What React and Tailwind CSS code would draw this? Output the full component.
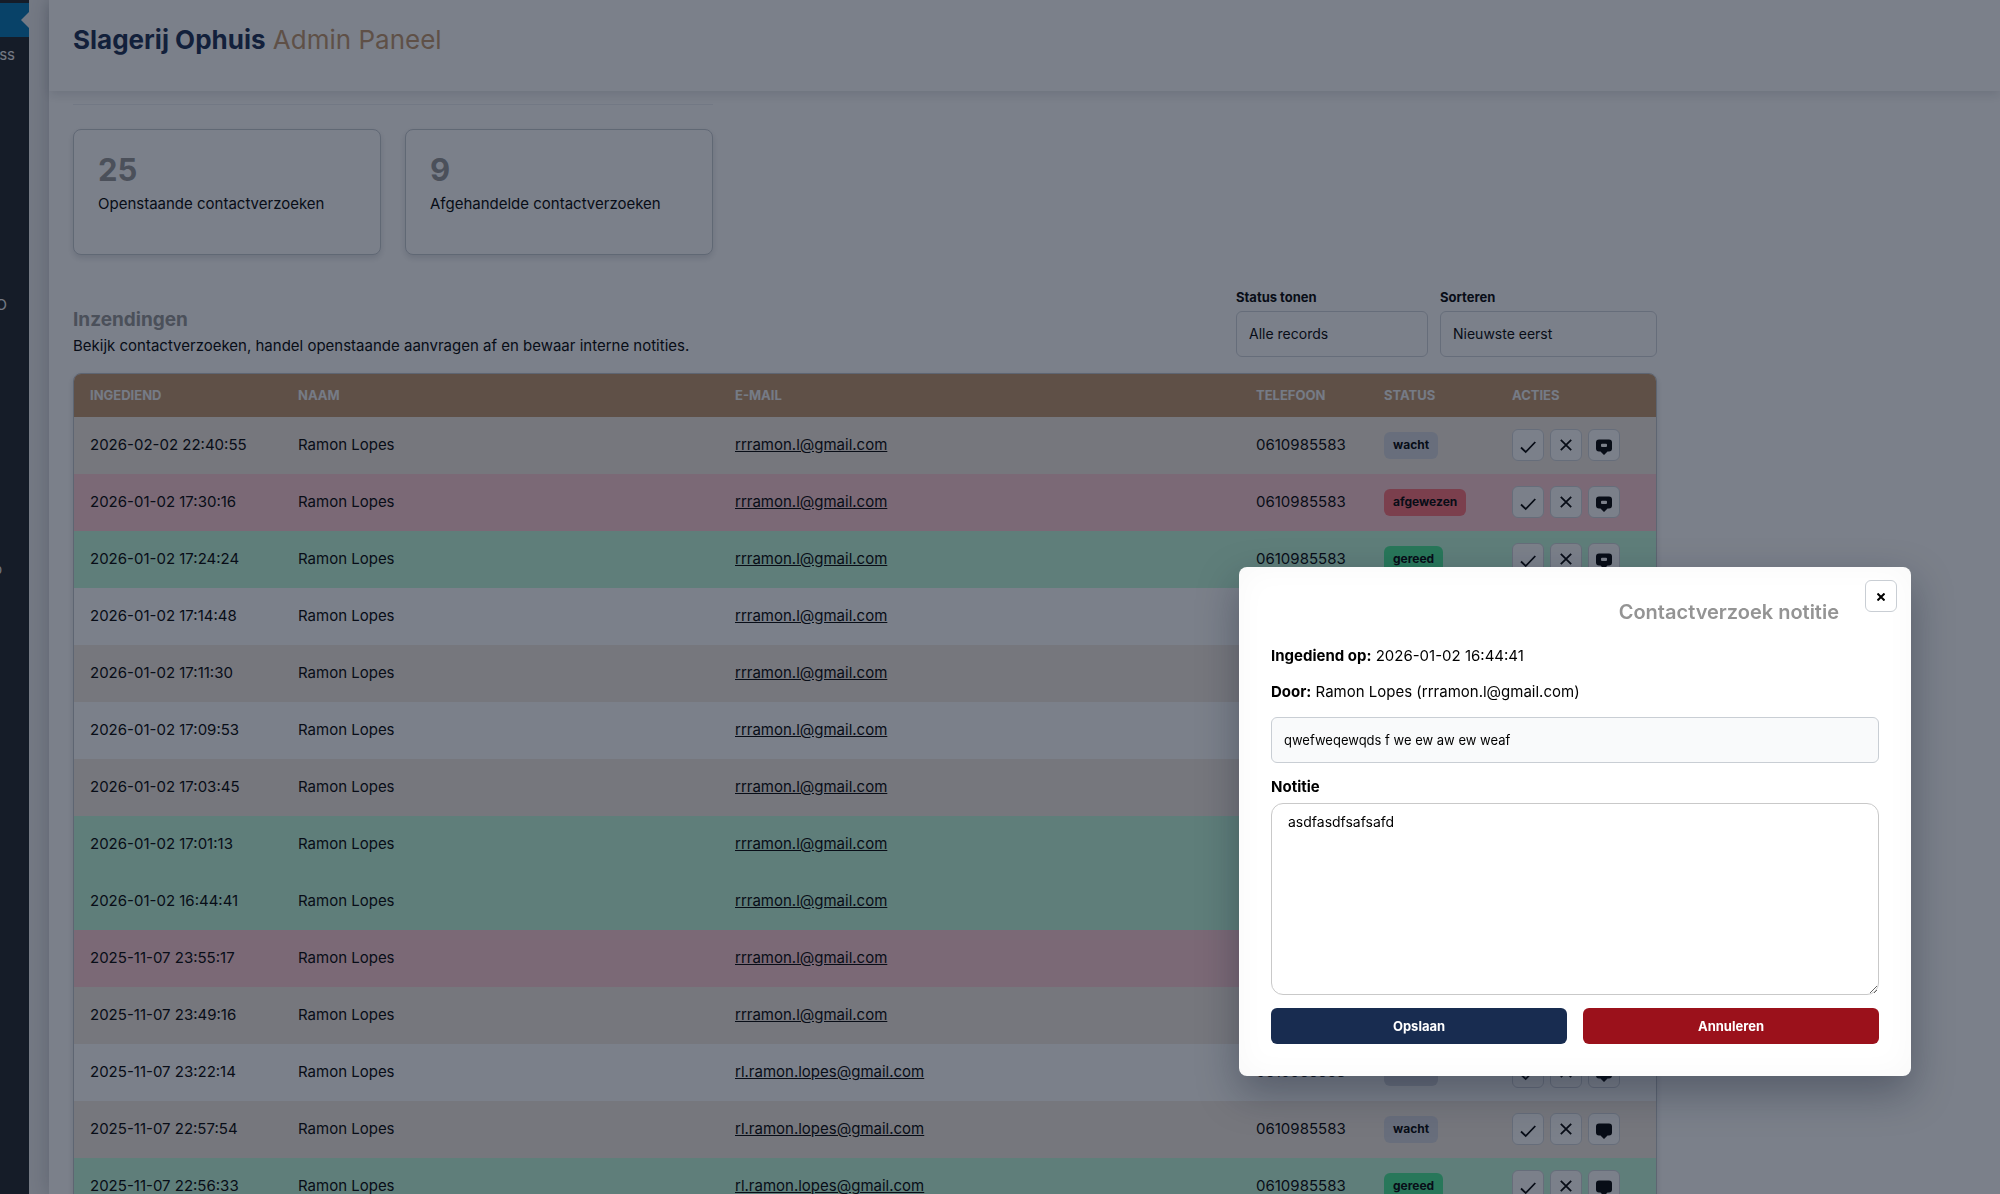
import React, {useState} from "react";

const rows = [
    {date: '2026-02-02 22:40:55', email: 'rrramon.l@gmail.com', status: 'wacht', note: true},
    {date: '2026-01-02 17:30:16', email: 'rrramon.l@gmail.com', status: 'afgewezen', note: true},
    {date: '2026-01-02 17:24:24', email: 'rrramon.l@gmail.com', status: 'gereed', note: true},
    {date: '2026-01-02 17:14:48', email: 'rrramon.l@gmail.com', status: 'wacht', note: true},
    {date: '2026-01-02 17:11:30', email: 'rrramon.l@gmail.com', status: 'wacht', note: true},
    {date: '2026-01-02 17:09:53', email: 'rrramon.l@gmail.com', status: 'wacht', note: true},
    {date: '2026-01-02 17:03:45', email: 'rrramon.l@gmail.com', status: 'wacht', note: true},
    {date: '2026-01-02 17:01:13', email: 'rrramon.l@gmail.com', status: 'gereed', note: true},
    {date: '2026-01-02 16:44:41', email: 'rrramon.l@gmail.com', status: 'gereed', note: true},
    {date: '2025-11-07 23:55:17', email: 'rrramon.l@gmail.com', status: 'afgewezen', note: false},
    {date: '2025-11-07 23:49:16', email: 'rrramon.l@gmail.com', status: 'wacht', note: false},
    {date: '2025-11-07 23:22:14', email: 'rl.ramon.lopes@gmail.com', status: 'wacht', note: false},
    {date: '2025-11-07 22:57:54', email: 'rl.ramon.lopes@gmail.com', status: 'wacht', note: false},
    {date: '2025-11-07 22:56:33', email: 'rl.ramon.lopes@gmail.com', status: 'gereed', note: false},
]

const badgeColors = {
    wacht: 'bg-[#d5d8df]',
    afgewezen: 'bg-[#ff7078]',
    gereed: 'bg-[#48ec96]',
}

function rowColor(status, index){
    if (status === 'afgewezen') return 'bg-[#ffccd3]';
    if (status === 'gereed') return 'bg-[#c1fbdb]';
    return index % 2 === 0 ? 'bg-[#f4ebe2]' : 'bg-white';
}

function IconButton({label, children}){
    return (
        <button type="button" aria-label={label} className="flex size-8 items-center justify-center rounded-md border border-[#d1d5db] bg-white text-black">
            {children}
        </button>
    )
}

function CheckIcon(){
    return (
        <svg viewBox="0 0 16 16" className="mt-1 size-4" fill="none" stroke="currentColor" strokeWidth="1.8">
            <path d="M1 8.500 L5.700 13 L15.300 3" />
        </svg>
    )
}

function CrossIcon(){
    return (
        <svg viewBox="0 0 16 16" className="size-4" fill="none" stroke="currentColor" strokeWidth="1.8">
            <path d="M2.800 2.800 L13.200 13.200 M13.200 2.800 L2.800 13.200" />
        </svg>
    )
}

// note icon has an opening in the bubble when a note is saved
function NoteIcon({filled}){
    return (
        <svg viewBox="0 0 16 16" className="mt-1 size-4" fill="currentColor">
            <path fillRule="evenodd" d={filled
                ? "M3 0.500h10a3 3 0 0 1 3 3v6a3 3 0 0 1-3 3h-1.500L8 16 4.500 12.500H3a3 3 0 0 1-3-3v-6a3 3 0 0 1 3-3zM6 4.800a1 1 0 0 0-1 1v1.200a1 1 0 0 0 1 1h4a1 1 0 0 0 1-1v-1.200a1 1 0 0 0-1-1z"
                : "M3 0.500h10a3 3 0 0 1 3 3v6a3 3 0 0 1-3 3h-1.500L8 16 4.500 12.500H3a3 3 0 0 1-3-3v-6a3 3 0 0 1 3-3z"} />
        </svg>
    )
}

function Sidebar(){
    return (
        <nav className="flex w-[29px] shrink-0 flex-col items-end overflow-hidden bg-[#1d2327] text-[15px] leading-5 text-[#f0f0f1]">
            <div className="relative mt-[3px] h-[34px] w-full shrink-0 bg-[#0077b3]">
                <span className="absolute top-[9px] right-0 border-y-8 border-r-8 border-y-transparent border-r-[#f0f0f1]"></span>
            </div>
            <a href="#wordpress" className="mt-2 mr-[14px] whitespace-nowrap">WordPress</a>
            <a href="#seo" className="mt-[230px] mr-[22px] whitespace-nowrap">Yoast SEO</a>
            <a href="#setup" className="mt-[244px] mr-[27px] whitespace-nowrap text-[13px]">Setup</a>
        </nav>
    )
}

function StatCard({value, label}){
    return (
        <div className="h-[126px] w-[308px] rounded-lg border border-[#c4c9cf] bg-white px-6 py-5 shadow-[0_3px_6px_rgba(15,23,42,0.14)]">
            <div className="text-[31px] leading-10 font-bold text-[#949494]">{value}</div>
            <div className="mt-[2px] text-[15px] leading-6">{label}</div>
        </div>
    )
}

function SubmissionsTable(){
    return (
        <div className="mt-[15px] overflow-hidden rounded-lg border border-[#bfc4cb] shadow-[0_3px_6px_rgba(15,23,42,0.14)]">
            <table className="w-full table-fixed border-collapse text-left text-[15px] leading-6">
                <colgroup>
                    <col className="w-[208px]" />
                    <col className="w-[437px]" />
                    <col />
                    <col className="w-[128px]" />
                    <col className="w-[128px]" />
                    <col className="w-[160px]" />
                </colgroup>
                <thead>
                    <tr className="h-[43px] bg-[#c1966c] text-[13px] text-[#f3f4f6] uppercase">
                        <th className="px-4 pb-px font-bold">Ingediend</th>
                        <th className="px-4 pb-px font-bold">Naam</th>
                        <th className="px-4 pb-px font-bold">E-mail</th>
                        <th className="px-4 pb-px font-bold">Telefoon</th>
                        <th className="px-4 pb-px font-bold">Status</th>
                        <th className="px-4 pb-px font-bold">Acties</th>
                    </tr>
                </thead>
                <tbody>
                    {rows.map((row, i) => (
                        <tr key={row.date} className={`h-[57px] ${rowColor(row.status, i)}`}>
                            <td className="px-4 pb-px">{row.date}</td>
                            <td className="px-4 pb-px">Ramon Lopes</td>
                            <td className="px-4 pb-px"><a href={`mailto:${row.email}`} className="underline">{row.email}</a></td>
                            <td className="px-4 pb-px">0610985583</td>
                            <td className="px-4 pb-px">
                                <span className={`inline-flex h-[27px] items-center rounded-md px-[9px] text-xs font-bold ${badgeColors[row.status]}`}>{row.status}</span>
                            </td>
                            <td className="px-4 pb-px">
                                <div className="flex gap-[6px]">
                                    <IconButton label="Gereed"><CheckIcon /></IconButton>
                                    <IconButton label="Afwijzen"><CrossIcon /></IconButton>
                                    <IconButton label="Notitie"><NoteIcon filled={row.note} /></IconButton>
                                </div>
                            </td>
                        </tr>
                    ))}
                </tbody>
            </table>
        </div>
    )
}

function NoteModal(){
    const [note, setNote] = useState("asdfasdfsafsafd");

    return (
        <div role="dialog" aria-modal="true" aria-labelledby="modal-title" className="fixed right-[89px] bottom-[118px] w-[672px] rounded-lg bg-white p-8 text-[15px] leading-6 text-black shadow-[0_16px_40px_rgba(15,23,42,0.35),inset_0_0_32px_rgba(0,0,0,0.03)]">
            <button type="button" aria-label="Sluiten" className="absolute top-[13px] right-[14px] flex size-8 items-center justify-center rounded-md border border-[#c9ced4] bg-white">
                <svg viewBox="0 0 8 8" className="mt-[2px] size-2" stroke="currentColor" strokeWidth="2">
                    <path d="M0.500 0.500 L7.500 7.500 M7.500 0.500 L0.500 7.500" />
                </svg>
            </button>
            <h2 id="modal-title" className="mt-px mr-10 text-right text-[20px] leading-6 font-semibold text-[#949494]">Contactverzoek notitie</h2>
            <p className="mt-5"><strong>Ingediend op:</strong> 2026-01-02 16:44:41</p>
            <p className="mt-3"><strong>Door:</strong> Ramon Lopes (rrramon.l@gmail.com)</p>
            <div className="mt-[13px] rounded-md border border-[#c9ced4] bg-[#f9fafb] px-3 py-3 text-[13px] leading-5">qwefweqewqds f we ew aw ew weaf</div>
            <label htmlFor="note" className="mt-3 block font-bold">Notitie</label>
            <textarea id="note" value={note} onChange={e => setNote(e.target.value)} className="mt-1 block h-[192px] w-full resize rounded-xl border border-[#c9c9c9] bg-white px-4 py-2 text-sm" />
            <div className="mt-[13px] grid grid-cols-2 gap-4 text-[13px] font-bold text-white">
                <button type="button" className="h-9 rounded-md bg-[#182c50]">Opslaan</button>
                <button type="button" className="h-9 rounded-md bg-[#9b111b]">Annuleren</button>
            </div>
        </div>
    )
}

export default function App(){
    const [status, setStatus] = useState("all");
    const [sort, setSort] = useState("new");

    return (
        <div className="flex h-screen overflow-hidden bg-[#f0f0f1] font-['Inter',sans-serif] text-black">
            <Sidebar />
            <main className="ml-5 min-w-0 flex-1 bg-white shadow-[0_0_20px_rgba(15,23,42,0.22)]">
                <header className="h-[91px] px-6 pt-5 shadow-[0_4px_10px_rgba(15,23,42,0.12)]">
                    <h1 className="text-[26px] leading-10 text-[#c1966c]"><strong className="text-[#182c50]">Slagerij Ophuis</strong> Admin Paneel</h1>
                </header>
                <div className="max-w-[1632px] px-6">
                    <div className="mt-[13px] w-[640px] border-t border-[#eceef1]"></div>
                    <div className="mt-6 flex gap-6">
                        <StatCard value="25" label="Openstaande contactverzoeken" />
                        <StatCard value="9" label="Afgehandelde contactverzoeken" />
                    </div>
                    <div className="mt-8 flex items-start justify-between">
                        <div className="pt-[19px]">
                            <h2 className="text-[19px] leading-7 font-bold text-[#949494]">Inzendingen</h2>
                            <p className="text-[15px] leading-6">Bekijk contactverzoeken, handel openstaande aanvragen af en bewaar interne notities.</p>
                        </div>
                        <div className="flex gap-3">
                            <div className="w-[192px]">
                                <label htmlFor="status" className="block text-[13px] leading-5 font-bold">Status tonen</label>
                                <select id="status" value={status} onChange={e => setStatus(e.target.value)} className="mt-1 block h-[46px] w-full appearance-none rounded-md border border-[#d1d5db] bg-white px-3 text-sm">
                                    <option value="all">Alle records</option>
                                    <option value="wacht">Wacht</option>
                                    <option value="gereed">Gereed</option>
                                </select>
                            </div>
                            <div className="w-[217px]">
                                <label htmlFor="sort" className="block text-[13px] leading-5 font-bold">Sorteren</label>
                                <select id="sort" value={sort} onChange={e => setSort(e.target.value)} className="mt-1 block h-[46px] w-full appearance-none rounded-md border border-[#d1d5db] bg-white px-3 text-sm">
                                    <option value="new">Nieuwste eerst</option>
                                    <option value="old">Oudste eerst</option>
                                </select>
                            </div>
                        </div>
                    </div>
                    <SubmissionsTable />
                </div>
            </main>
            <div className="fixed inset-0 bg-[#0f172a]/55"></div>
            <NoteModal />
        </div>
    )
}
